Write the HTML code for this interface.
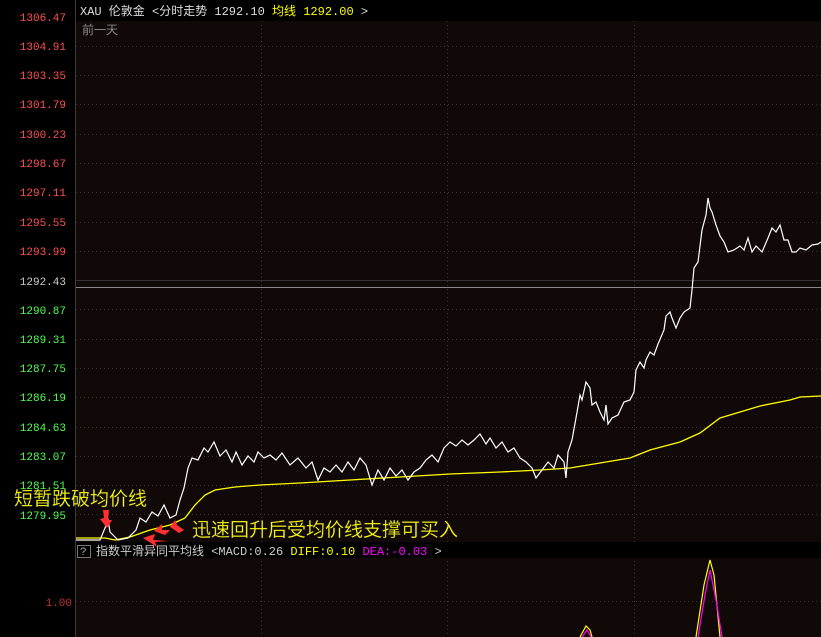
<!DOCTYPE html><html><head><meta charset="utf-8"><style>
body{margin:0;background:#000;width:821px;height:637px;overflow:hidden;font-family:"Liberation Mono","Noto Sans CJK SC",monospace}
svg{position:absolute;left:0;top:0}
</style></head><body>
<svg width="821" height="637" xmlns="http://www.w3.org/2000/svg" font-family="Liberation Mono, Noto Sans CJK SC, monospace">
<rect x="0" y="0" width="821" height="637" fill="#000"/>
<rect x="76" y="21" width="745" height="521" fill="#110808"/>
<rect x="76" y="558" width="745" height="79" fill="#110808"/>
<line x1="75.5" y1="0" x2="75.5" y2="637" stroke="#3a3a3a"/>
<g stroke="#3a3030" stroke-dasharray="1,3">
<line x1="76" y1="46.5" x2="821" y2="46.5"/><line x1="76" y1="75.5" x2="821" y2="75.5"/><line x1="76" y1="104.5" x2="821" y2="104.5"/><line x1="76" y1="134.5" x2="821" y2="134.5"/><line x1="76" y1="163.5" x2="821" y2="163.5"/><line x1="76" y1="192.5" x2="821" y2="192.5"/><line x1="76" y1="222.5" x2="821" y2="222.5"/><line x1="76" y1="251.5" x2="821" y2="251.5"/><line x1="76" y1="309.5" x2="821" y2="309.5"/><line x1="76" y1="339.5" x2="821" y2="339.5"/><line x1="76" y1="368.5" x2="821" y2="368.5"/><line x1="76" y1="397.5" x2="821" y2="397.5"/><line x1="76" y1="427.5" x2="821" y2="427.5"/><line x1="76" y1="456.5" x2="821" y2="456.5"/><line x1="76" y1="485.5" x2="821" y2="485.5"/><line x1="76" y1="514.5" x2="821" y2="514.5"/><line x1="76" y1="601.5" x2="821" y2="601.5"/>
<line x1="261.5" y1="21" x2="261.5" y2="637"/><line x1="447.5" y1="21" x2="447.5" y2="637"/><line x1="634.5" y1="21" x2="634.5" y2="637"/>
</g>
<line x1="76" y1="280.5" x2="821" y2="280.5" stroke="#333"/>
<line x1="76" y1="287.5" x2="821" y2="287.5" stroke="#888"/>
<g font-size="11" text-anchor="end">
<text x="66" y="21" fill="#ff5050">1306.47</text><text x="66" y="50" fill="#ff5050">1304.91</text><text x="66" y="79" fill="#ff5050">1303.35</text><text x="66" y="108" fill="#ff5050">1301.79</text><text x="66" y="138" fill="#ff5050">1300.23</text><text x="66" y="167" fill="#ff5050">1298.67</text><text x="66" y="196" fill="#ff5050">1297.11</text><text x="66" y="226" fill="#ff5050">1295.55</text><text x="66" y="255" fill="#ff5050">1293.99</text>
<text x="66" y="285" fill="#ccc">1292.43</text>
<text x="66" y="314" fill="#50ff50">1290.87</text><text x="66" y="343" fill="#50ff50">1289.31</text><text x="66" y="372" fill="#50ff50">1287.75</text><text x="66" y="401" fill="#50ff50">1286.19</text><text x="66" y="431" fill="#50ff50">1284.63</text><text x="66" y="460" fill="#50ff50">1283.07</text><text x="66" y="489" fill="#50ff50">1281.51</text><text x="66" y="519" fill="#50ff50">1279.95</text>
<text x="72" y="606" fill="#c03030">1.00</text>
</g>
<text x="80" y="15" font-size="12" fill="#ddd">XAU 伦敦金 &lt;分时走势 1292.10 <tspan fill="#ffff00">均线 1292.00</tspan>  &gt;</text>
<text x="82" y="34" font-size="12" fill="#888">前一天</text>
<polyline fill="none" stroke="#ffff00" stroke-width="1.3" points="76,538 105,538 115,540 130,537 150,530 170,525 185,518 195,505 205,495 215,490 235,487 260,485 300,483 350,480 400,477 450,474 500,472 540,470 570,468 600,463 630,458 650,450 680,442 700,433 720,418 740,412 760,406 790,400 800,397 821,396"/>
<polyline fill="none" stroke="#fff" stroke-width="1.2" points="76,540 100,540 105,528 108,520 110,532 118,540 128,538 136,530 140,518 146,522 152,512 158,516 164,505 170,518 176,515 180,500 184,488 188,468 192,458 198,460 204,448 208,452 214,442 220,456 226,450 232,462 236,452 242,465 248,456 254,462 258,452 264,458 270,455 276,460 282,453 290,465 298,458 306,468 312,462 318,480 324,468 330,472 336,465 342,472 348,462 354,470 360,458 366,465 372,485 378,470 384,480 390,468 396,476 402,470 408,480 414,472 420,468 426,460 432,455 438,462 444,448 450,442 456,446 462,440 468,445 474,440 480,434 486,444 490,438 496,448 502,442 508,452 514,448 520,458 526,462 532,468 536,478 542,470 548,462 554,468 558,455 564,462 566,478 568,452 572,440 576,418 580,395 582,400 586,382 590,388 592,405 596,402 600,412 604,420 606,405 608,424 612,418 618,415 624,402 630,400 634,392 636,370 640,362 644,368 646,360 650,352 654,355 658,344 664,330 666,316 670,312 672,318 676,328 680,318 684,312 690,308 692,290 694,268 698,262 702,230 706,215 708,198 710,208 712,212 716,225 720,236 724,242 728,252 734,250 740,246 744,250 748,238 752,252 756,246 762,252 768,238 772,228 776,232 780,225 784,240 788,240 792,252 796,252 800,248 806,250 812,245 818,244 821,242"/>
<rect x="76" y="542" width="745" height="16" fill="#000"/>
<rect x="77.5" y="545.5" width="13" height="12" fill="none" stroke="#777"/>
<text x="80" y="555" font-size="11" fill="#aaa">?</text>
<text x="96" y="555" font-size="12" fill="#ccc">指数平滑异同平均线 &lt;MACD:0.26 <tspan fill="#ffff00">DIFF:0.10</tspan> <tspan fill="#ff00ff">DEA:-0.03</tspan>  &gt;</text>
<polyline fill="none" stroke="#ffff00" stroke-width="1.2" points="580,637 586,626 590,630 592,637"/>
<polyline fill="none" stroke="#ff00ff" stroke-width="1.2" points="582,637 587,630 591,637"/>
<polyline fill="none" stroke="#ffff00" stroke-width="1.2" points="696,637 704,585 710,560 714,575 720,637"/>
<polyline fill="none" stroke="#ff00ff" stroke-width="1.2" points="698,637 705,595 710,570 716,600 722,637"/>
<g fill="#ff3030">
<polygon points="103,510 109,510 108,520 112,520 107,528 100,519 104,518"/>
<polygon points="143,538 155,534 153,540 168,541 155,542 157,547"/>
<polygon points="154,531 162,524 162,530 170,530 165,535"/>
<polygon points="170,527 175,520 177,525 184,530 179,533"/>
</g>
<text x="14" y="505" font-size="19" fill="#ffff00" stroke="#444" stroke-width="0.3" font-family="Noto Sans CJK SC, sans-serif">短暂跌破均价线</text>
<text x="192" y="536" font-size="19" fill="#ffff00" stroke="#444" stroke-width="0.3" font-family="Noto Sans CJK SC, sans-serif">迅速回升后受均价线支撑可买入</text>
</svg>
</body></html>
